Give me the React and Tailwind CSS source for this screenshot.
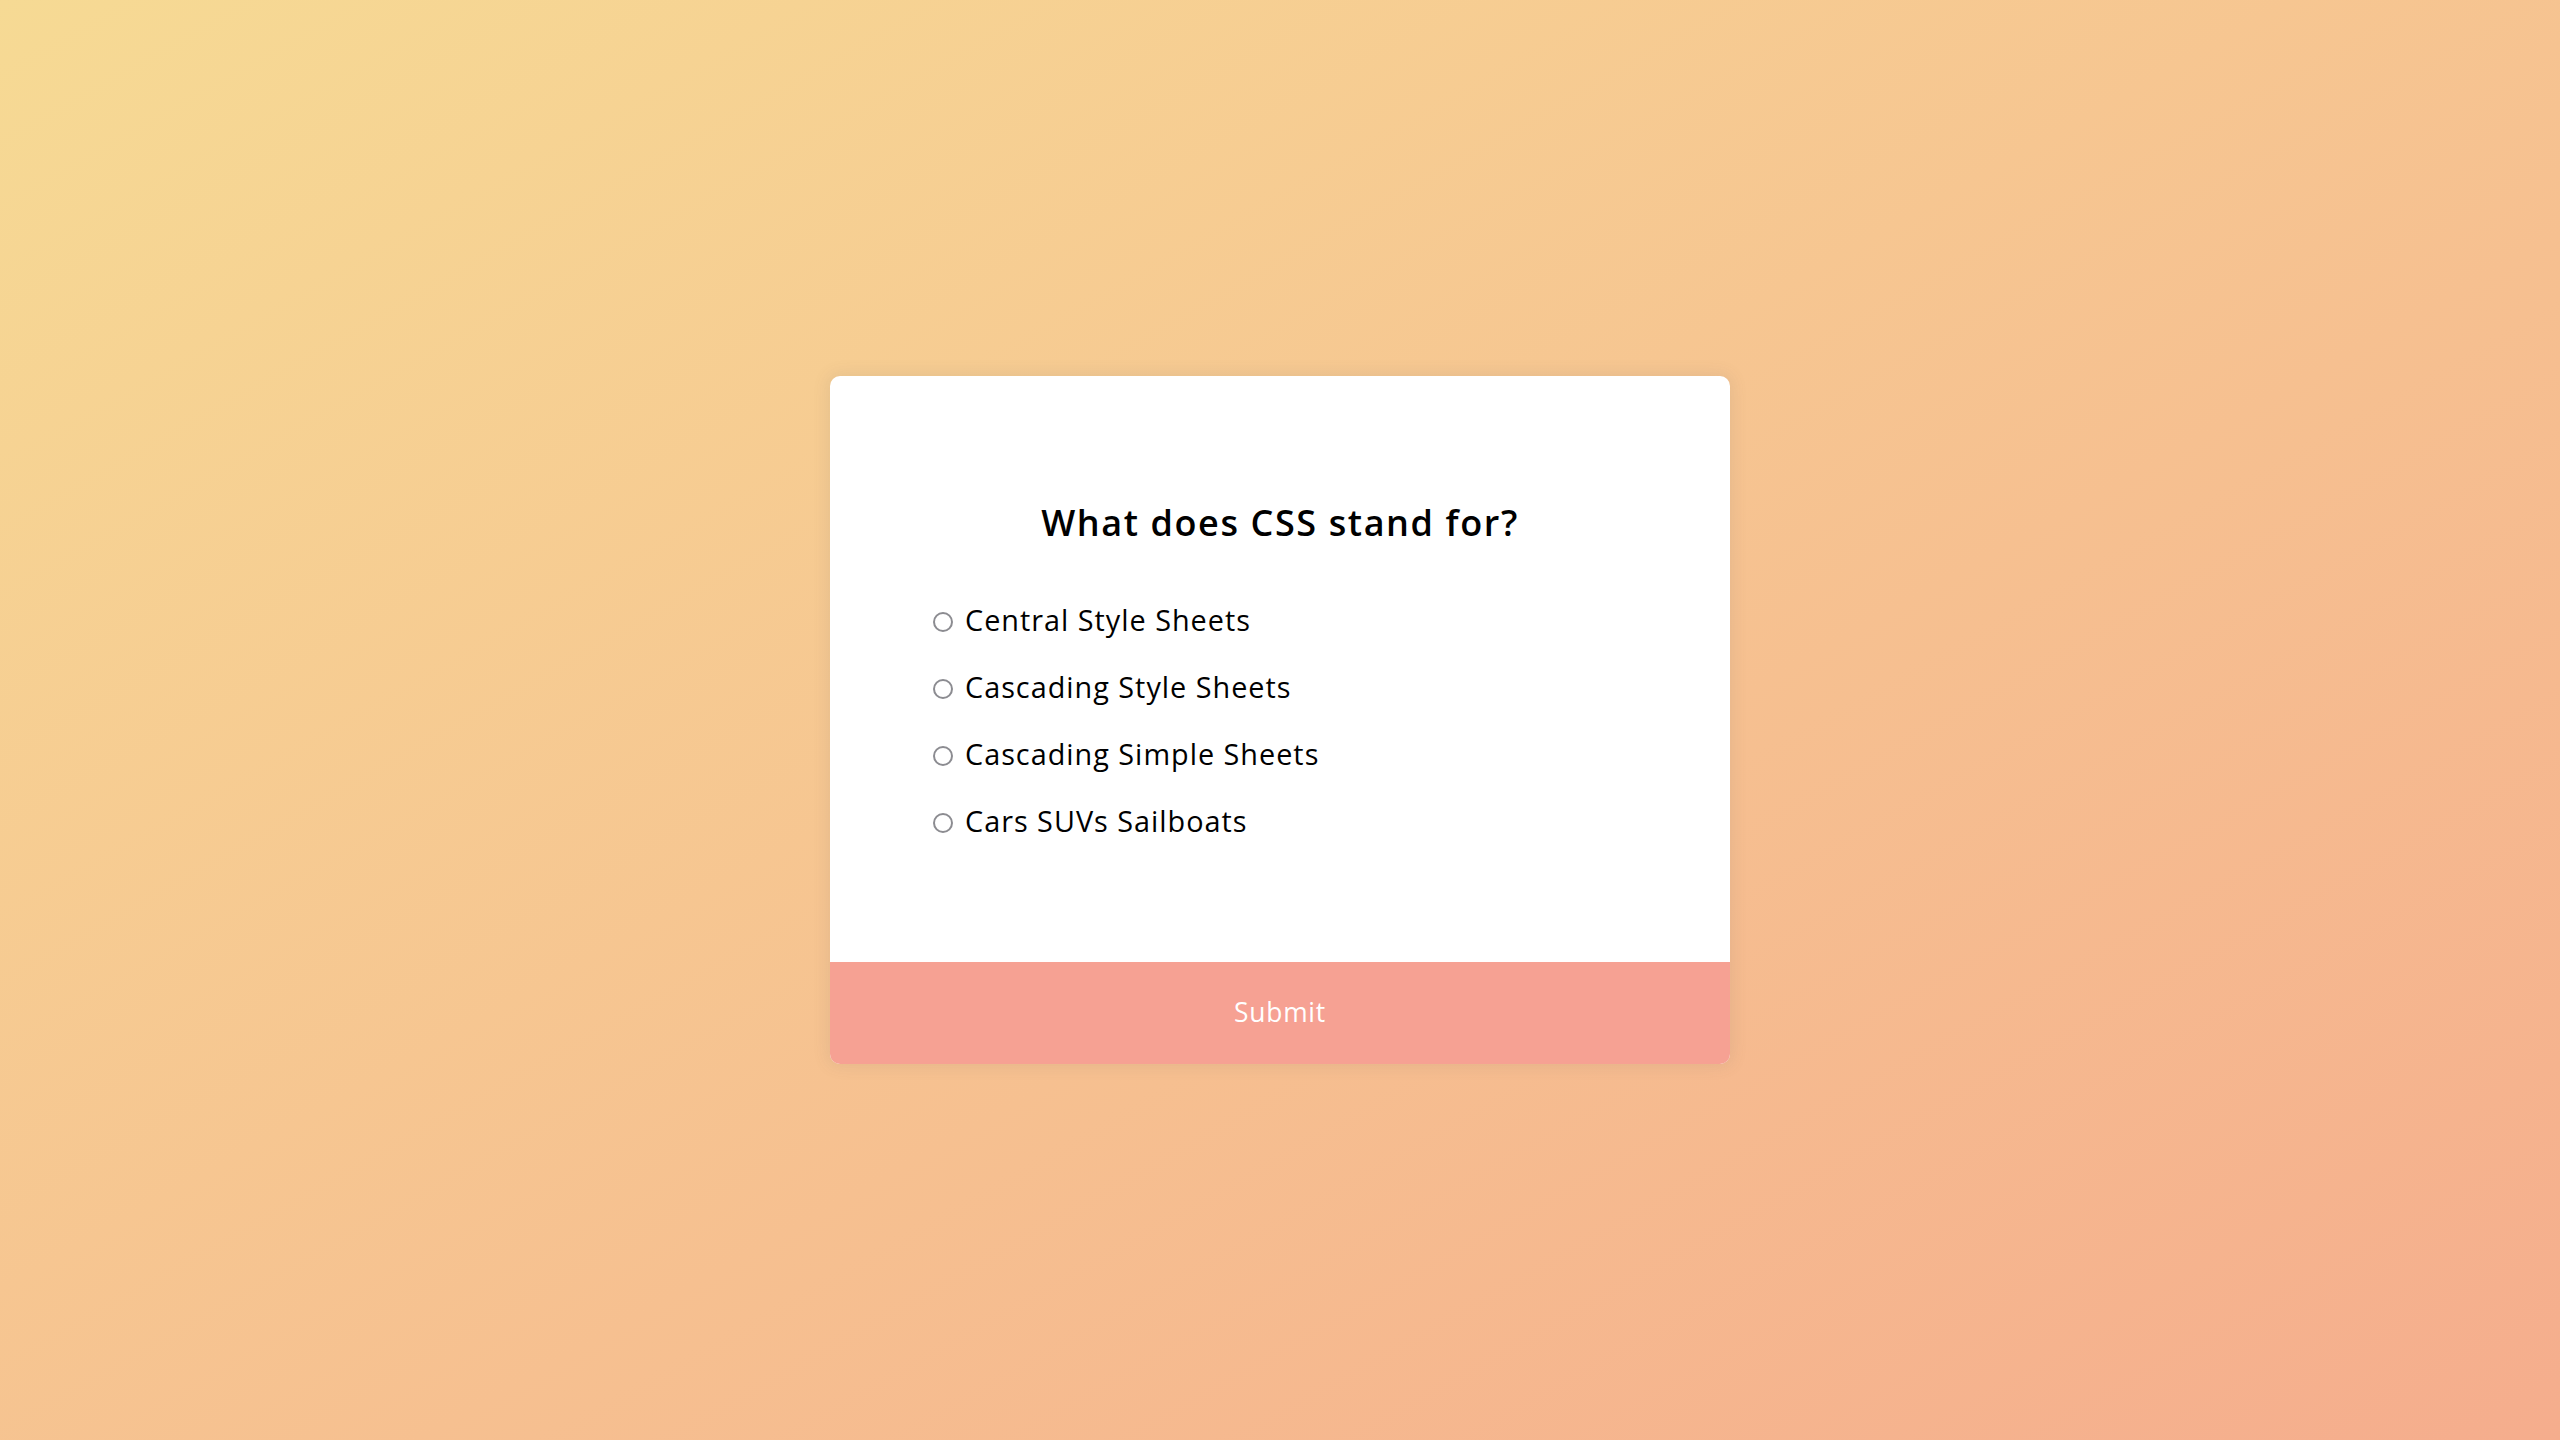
import { useState } from "react"

const QUESTION = {
  title: "What does CSS stand for?",
  answers: ["Central Style Sheets", "Cascading Style Sheets", "Cascading Simple Sheets", "Cars SUVs Sailboats"],
}

export default function App() {
  const [picked, setPicked] = useState(null)

  return (
    <div
      className="min-h-screen w-full flex items-center justify-center bg-linear-to-br from-[#f6da94] to-[#f5ad8d]"
      style={{ fontFamily: '"Open Sans", "Liberation Sans", sans-serif' }}
    >
      <div className="w-[900px] bg-white rounded-[10px] overflow-hidden shadow-[0_0_15px_3px_rgba(100,100,100,0.1)]">
        <div className="p-[96px]">
          <h2 className="py-[24px] text-center text-[36px] leading-[54px] font-semibold text-black tracking-[1.6px]">
            {QUESTION.title}
          </h2>
          <ul className="flex flex-col gap-[24px] py-[24px]">
            {QUESTION.answers.map((answer, idx) => (
              <li key={idx} className="flex items-center text-[28.8px] leading-[43px] text-black tracking-[1px]">
                <input
                  type="radio"
                  name="answer"
                  id={`a${idx}`}
                  checked={picked === idx}
                  onChange={() => setPicked(idx)}
                  className="appearance-none w-[20px] h-[20px] ml-[7px] mr-[12px] mt-[5px] rounded-full border-[2.5px] border-[#8c8c91] bg-white shrink-0 checked:border-[6px] checked:border-[#f5a193]"
                />
                <label htmlFor={`a${idx}`} className="cursor-pointer">{answer}</label>
              </li>
            ))}
          </ul>
        </div>
        <button className="block w-full h-[102px] bg-[#f6a193] text-white text-[26.4px] tracking-[0.8px] cursor-pointer hover:bg-[#f39585]">
          Submit
        </button>
      </div>
    </div>
  )
}
